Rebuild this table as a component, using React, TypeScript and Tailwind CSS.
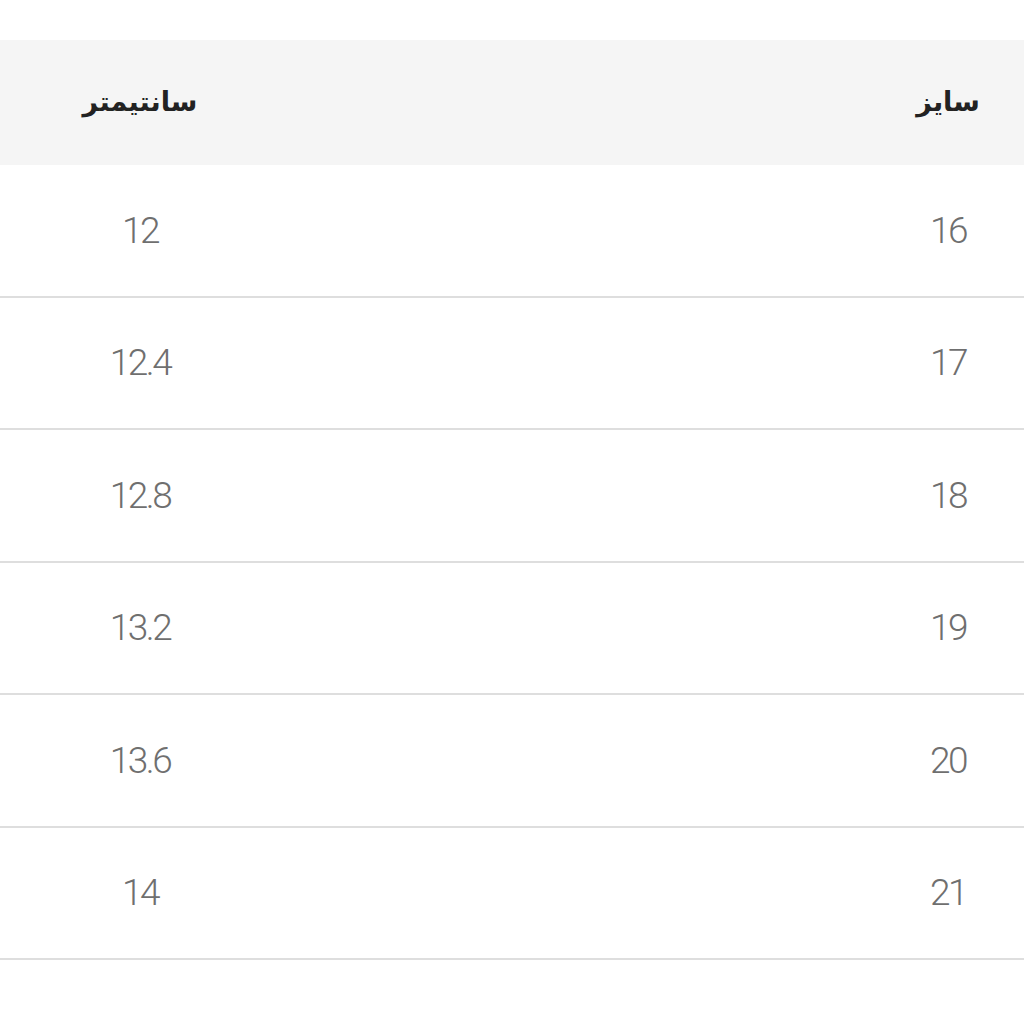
import React from "react";

const rows: [string, string][] = [
  ["16", "12"],
  ["17", "12.4"],
  ["18", "12.8"],
  ["19", "13.2"],
  ["20", "13.6"],
  ["21", "14"],
];

const App: React.FC = () => {
  return (
    <div className="w-[1024px] h-[1024px] bg-white pt-[40px] overflow-hidden">
      <div dir="rtl" className="w-full">
        <div className="flex items-center justify-between h-[125px] bg-[#f5f5f5] pr-[16px] pl-[80px]">
          <div className="w-[120px] text-center text-[27px] font-bold text-[#222] font-['DejaVu_Sans',sans-serif]">
            سایز
          </div>
          <div className="w-[120px] text-center text-[27px] font-bold text-[#222] font-['DejaVu_Sans',sans-serif]">
            سانتیمتر
          </div>
        </div>
        {rows.map(([size, cm]) => (
          <div
            key={size}
            className="flex items-center justify-between h-[132.5px] border-b-2 border-[#dedede] pr-[16px] pl-[80px]"
          >
            <div className="w-[120px] text-center text-[37px] font-light text-[#6f6f6f] font-['Roboto',sans-serif] tracking-[-2.5px]">
              {size}
            </div>
            <div className="w-[120px] text-center text-[37px] font-light text-[#6f6f6f] font-['Roboto',sans-serif] tracking-[-2.5px]">
              {cm}
            </div>
          </div>
        ))}
      </div>
    </div>
  );
};

export default App;
